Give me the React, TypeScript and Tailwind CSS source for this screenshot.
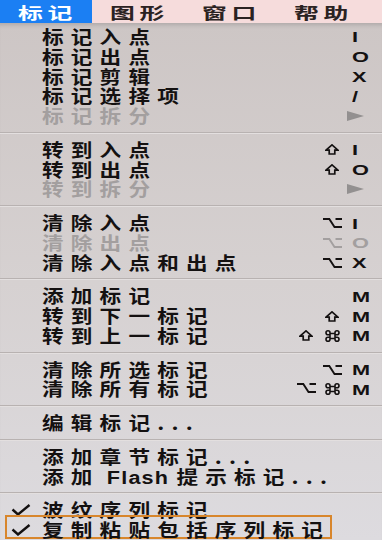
import type { ReactNode } from "react";

type Item = {
  label: ReactNode;
  mods?: string[];
  keyName?: string;
  sub?: boolean;
  disabled?: boolean;
  checked?: boolean;
  boxed?: boolean;
};

const groups: Item[][] = [
  [
    { label: "标记入点", keyName: "I" },
    { label: "标记出点", keyName: "O" },
    { label: "标记剪辑", keyName: "X" },
    { label: "标记选择项", keyName: "/" },
    { label: "标记拆分", sub: true, disabled: true },
  ],
  [
    { label: "转到入点", mods: ["shift"], keyName: "I" },
    { label: "转到出点", mods: ["shift"], keyName: "O" },
    { label: "转到拆分", sub: true, disabled: true },
  ],
  [
    { label: "清除入点", mods: ["opt"], keyName: "I" },
    { label: "清除出点", mods: ["opt"], keyName: "O", disabled: true },
    { label: "清除入点和出点", mods: ["opt"], keyName: "X" },
  ],
  [
    { label: "添加标记", keyName: "M" },
    { label: "转到下一标记", mods: ["shift"], keyName: "M" },
    { label: "转到上一标记", mods: ["shift", "cmd"], keyName: "M" },
  ],
  [
    { label: "清除所选标记", mods: ["opt"], keyName: "M" },
    { label: "清除所有标记", mods: ["opt", "cmd"], keyName: "M" },
  ],
  [{ label: "编辑标记..." }],
  [
    { label: "添加章节标记..." },
    {
      label: (
        <>
          添加
          <span className="mx-[6px] font-['Liberation_Sans'] tracking-[1px]">Flash</span>
          提示标记...
        </>
      ),
    },
  ],
  [
    { label: "波纹序列标记", checked: true },
    { label: "复制粘贴包括序列标记", checked: true, boxed: true },
  ],
];

// keyboard modifier symbols: shift, option, command
function Mod({ kind }: { kind: string }) {
  if (kind === "shift")
    return (
      <svg width="14" height="11" viewBox="0 0 14 11">
        <path d="M1 6.2 L7 0.9 L13 6.2 L9.8 6.2 L9.8 10 L4.2 10 L4.2 6.2 Z" fill="none" stroke="currentColor" strokeWidth="1.7" />
      </svg>
    );
  if (kind === "opt")
    return (
      <svg width="19" height="10" viewBox="0 0 19 10">
        <path d="M0 1 H6.3 L11.5 9 H19 M12.5 1 H19" fill="none" stroke="currentColor" strokeWidth="1.9" />
      </svg>
    );
  return (
    <svg width="15" height="12" viewBox="0 0 15 12">
      <path
        d="M5 3.5 H10 V8.5 H5 Z M5 3.5 V2.8 A2 2 0 1 0 3 4.8 H5 M10 3.5 V2.8 A2 2 0 1 1 12 4.8 H10 M5 8.5 V9.2 A2 2 0 1 1 3 7.2 H5 M10 8.5 V9.2 A2 2 0 1 0 12 7.2 H10"
        fill="none"
        stroke="currentColor"
        strokeWidth="1.6"
      />
    </svg>
  );
}

const Check = () => (
  <svg width="20" height="12" viewBox="0 0 20 12">
    <path d="M1.5 5.5 L7 10.5 L18.5 1" fill="none" stroke="currentColor" strokeWidth="2.4" />
  </svg>
);

const Arrow = () => (
  <svg width="17" height="10" viewBox="0 0 17 10">
    <path d="M0 0 L17 5 L0 10 Z" fill="#939090" />
  </svg>
);

function Row({ item }: { item: Item }) {
  const color = item.disabled ? "text-[#a39f9f]" : "text-[#141111]";
  const mods = item.mods ?? [];
  return (
    <div className={`relative flex h-[19.8px] items-center ${color}`}>
      {item.boxed && (
        <div className="absolute left-[5px] -top-[5px] h-[24px] w-[327px] border-[2.5px] border-[#d8862c]" />
      )}
      <div className="flex w-[42px] justify-center">{item.checked && <Check />}</div>
      <div className="flex-1 whitespace-nowrap">
        <span className="inline-block origin-left scale-x-[1.2] text-[18px] leading-none font-semibold tracking-[6px]">
          {item.label}
        </span>
      </div>
      <div className="flex w-[52px] justify-end">
        {mods.map((m, i) => (
          <span key={i} className="flex w-[26px] justify-center">
            <Mod kind={m} />
          </span>
        ))}
      </div>
      <div className="ml-[7px] flex w-[30px] items-center">
        {item.sub ? (
          <span className="-ml-[5px] flex">
            <Arrow />
          </span>
        ) : (
          <span className="inline-block origin-left scale-x-[1.45] font-['Liberation_Sans'] text-[15px] leading-none font-bold">
            {item.keyName}
          </span>
        )}
      </div>
    </div>
  );
}

const Separator = () => (
  <div className="flex h-[13.9px] flex-col justify-center">
    <div className="h-px bg-[#b8b2b1]" />
    <div className="h-px bg-[#e3dfdf]" />
  </div>
);

export default function App() {
  const bar = ["标记", "图形", "窗口", "帮助"];
  return (
    <div className="h-[540px] w-[382px] overflow-hidden bg-[#d6d1d0] font-['Noto_Sans_CJK_SC',sans-serif]">
      <div className="flex h-[23px] bg-[#f6dcdc]">
        {bar.map((b, i) => (
          <div
            key={b}
            className={`flex w-[92px] items-center pl-[18px] ${i === 0 ? "bg-[#1b7ff3] text-white" : "text-[#2a2222]"}`}
          >
            <span className="inline-block origin-left scale-x-[1.55] text-[16px] leading-none font-semibold tracking-[3px]">
              {b}
            </span>
          </div>
        ))}
      </div>
      <div className="bg-gradient-to-b from-[#cdc6c5] via-[#d6d1d1] to-[#dddbdf] pt-[4px] shadow-[inset_0_5px_4px_-3px_rgba(0,0,0,0.15)]">
        {groups.map((g, gi) => (
          <div key={gi}>
            {gi > 0 && <Separator />}
            {g.map((item, ii) => (
              <Row key={ii} item={item} />
            ))}
          </div>
        ))}
      </div>
    </div>
  );
}
